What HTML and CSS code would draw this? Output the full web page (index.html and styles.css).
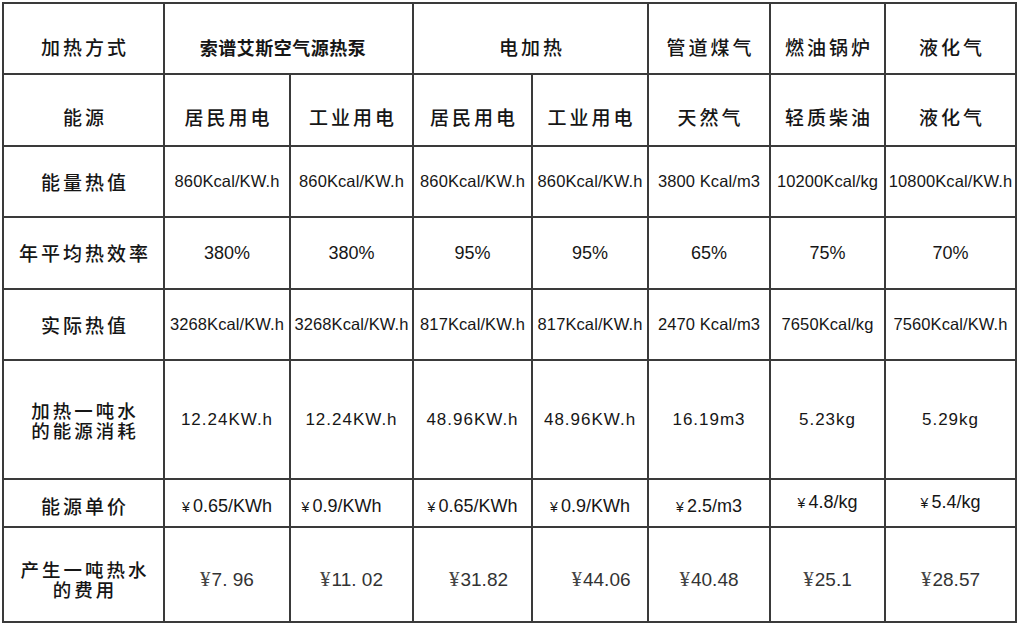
FILE: index.html
```html
<!DOCTYPE html>
<html lang="zh-CN">
<head>
<meta charset="utf-8">
<title>加热方式对比</title>
<link rel="stylesheet" href="styles.css">
</head>
<body>
<div class="wrap">
<table class="cmp">
  <colgroup>
    <col class="c0"><col class="c1"><col class="c2"><col class="c3"><col class="c4"><col class="c5"><col class="c6"><col class="c7">
  </colgroup>
  <tr class="r1">
    <td class="lbl">加热方式</td>
    <td colspan="2" class="brand">索谱艾斯空气源热泵</td>
    <td colspan="2" class="lbl">电加热</td>
    <td class="lbl">管道煤气</td>
    <td class="lbl">燃油锅炉</td>
    <td class="lbl">液化气</td>
  </tr>
  <tr class="r2">
    <td class="lbl">能源</td>
    <td class="lbl">居民用电</td>
    <td class="lbl">工业用电</td>
    <td class="lbl">居民用电</td>
    <td class="lbl">工业用电</td>
    <td class="lbl">天然气</td>
    <td class="lbl">轻质柴油</td>
    <td class="lbl">液化气</td>
  </tr>
  <tr class="r3">
    <td class="lbl">能量热值</td>
    <td class="n">860Kcal/KW.h</td>
    <td class="n">860Kcal/KW.h</td>
    <td class="n">860Kcal/KW.h</td>
    <td class="n">860Kcal/KW.h</td>
    <td class="n">3800 Kcal/m3</td>
    <td class="n">10200Kcal/kg</td>
    <td class="n">10800Kcal/KW.h</td>
  </tr>
  <tr class="r4">
    <td class="lbl">年平均热效率</td>
    <td class="p">380%</td>
    <td class="p">380%</td>
    <td class="p">95%</td>
    <td class="p">95%</td>
    <td class="p">65%</td>
    <td class="p">75%</td>
    <td class="p">70%</td>
  </tr>
  <tr class="r5">
    <td class="lbl">实际热值</td>
    <td class="n">3268Kcal/KW.h</td>
    <td class="n">3268Kcal/KW.h</td>
    <td class="n">817Kcal/KW.h</td>
    <td class="n">817Kcal/KW.h</td>
    <td class="n">2470 Kcal/m3</td>
    <td class="n">7650Kcal/kg</td>
    <td class="n">7560Kcal/KW.h</td>
  </tr>
  <tr class="r6">
    <td class="lbl two"><span class="ln">加热一吨水</span><span class="ln">的能源消耗</span></td>
    <td class="q">12.24KW.h</td>
    <td class="q">12.24KW.h</td>
    <td class="q">48.96KW.h</td>
    <td class="q">48.96KW.h</td>
    <td class="q">16.19m3</td>
    <td class="q">5.23kg</td>
    <td class="q">5.29kg</td>
  </tr>
  <tr class="r7">
    <td class="lbl">能源单价</td>
    <td class="u"><span class="y">¥</span>0.65/KWh</td>
    <td class="u left"><span class="y">¥</span>0.9/KWh</td>
    <td class="u"><span class="y">¥</span>0.65/KWh</td>
    <td class="u"><span class="y">¥</span>0.9/KWh</td>
    <td class="u"><span class="y">¥</span>2.5/m3</td>
    <td class="u up"><span class="y">¥</span>4.8/kg</td>
    <td class="u up"><span class="y">¥</span>5.4/kg</td>
  </tr>
  <tr class="r8">
    <td class="lbl two"><span class="ln">产生一吨热水</span><span class="ln">的费用</span></td>
    <td class="c"><span class="yy">¥</span>7. 96</td>
    <td class="c"><span class="yy">¥</span>11. 02</td>
    <td class="c s1"><span class="yy">¥</span>31.82</td>
    <td class="c s2"><span class="yy">¥</span>44.06</td>
    <td class="c"><span class="yy">¥</span>40.48</td>
    <td class="c"><span class="yy">¥</span>25.1</td>
    <td class="c"><span class="yy">¥</span>28.57</td>
  </tr>
</table>
</div>
</body>
</html>
```

FILE: styles.css
```css
html, body {
  margin: 0;
  padding: 0;
  background: #ffffff;
}

.wrap {
  padding: 2px 0 0 2px;
}

.cmp {
  border-collapse: collapse;
  table-layout: fixed;
  width: 1015px;
  color: #161616;
  font-family: "Noto Sans CJK SC", "Liberation Sans", sans-serif;
}

.c0 { width: 161px; }
.c1 { width: 126px; }
.c2 { width: 123px; }
.c3 { width: 119px; }
.c4 { width: 116px; }
.c5 { width: 122px; }
.c6 { width: 115px; }
.c7 { width: 131px; }

.cmp td {
  border: 2px solid #3a3a3a;
  padding: 0;
  text-align: center;
  vertical-align: middle;
  white-space: nowrap;
  overflow: hidden;
}

.r1 { height: 71px; }
.r2 { height: 72px; }
.r3 { height: 71px; }
.r4 { height: 72px; }
.r5 { height: 71px; }
.r6 { height: 119px; }
.r7 { height: 48px; }
.r8 { height: 95px; }

.lbl {
  font-family: "Noto Sans CJK SC", sans-serif;
  font-size: 19px;
  font-weight: 500;
  letter-spacing: 3px;
  line-height: 22px;
  padding-left: 3px !important;
}

.ln {
  display: block;
  height: 20px;
  line-height: 20px;
  font-size: 18.5px;
}

.r1 td { padding-top: 17px; }
.r2 td { padding-top: 14px; }
.r7 td { padding-top: 6px; }
.r8 td { padding-top: 9px; }

.brand {
  font-family: "Noto Sans CJK SC", sans-serif;
  font-weight: bold;
  font-size: 18px;
  letter-spacing: 0.5px;
  padding-right: 11px !important;
}

.n {
  font-family: "Liberation Sans", Arial, sans-serif;
  font-size: 16.5px;
  letter-spacing: 0.1px;
}

.p {
  font-family: "Liberation Sans", Arial, sans-serif;
  font-size: 18px;
}

.q {
  font-family: "Liberation Sans", Arial, sans-serif;
  font-size: 17px;
  letter-spacing: 1px;
}

.u {
  font-family: "Liberation Sans", Arial, sans-serif;
  font-size: 18px;
}

.y {
  font-size: 14px;
  margin-right: 3px;
}

.r7 td.left { padding-right: 20px; }
.r7 td.up { padding-top: 0; padding-bottom: 2px; }

.c {
  font-family: "Liberation Sans", Arial, sans-serif;
  font-size: 19px;
  color: #333333;
}

.yy {
  font-family: "Liberation Serif", serif;
  font-size: 21px;
  color: #444444;
  margin-right: 1px;
}

.r8 td.s1 { padding-left: 12px; }
.r8 td.s2 { padding-left: 22px; }
```
